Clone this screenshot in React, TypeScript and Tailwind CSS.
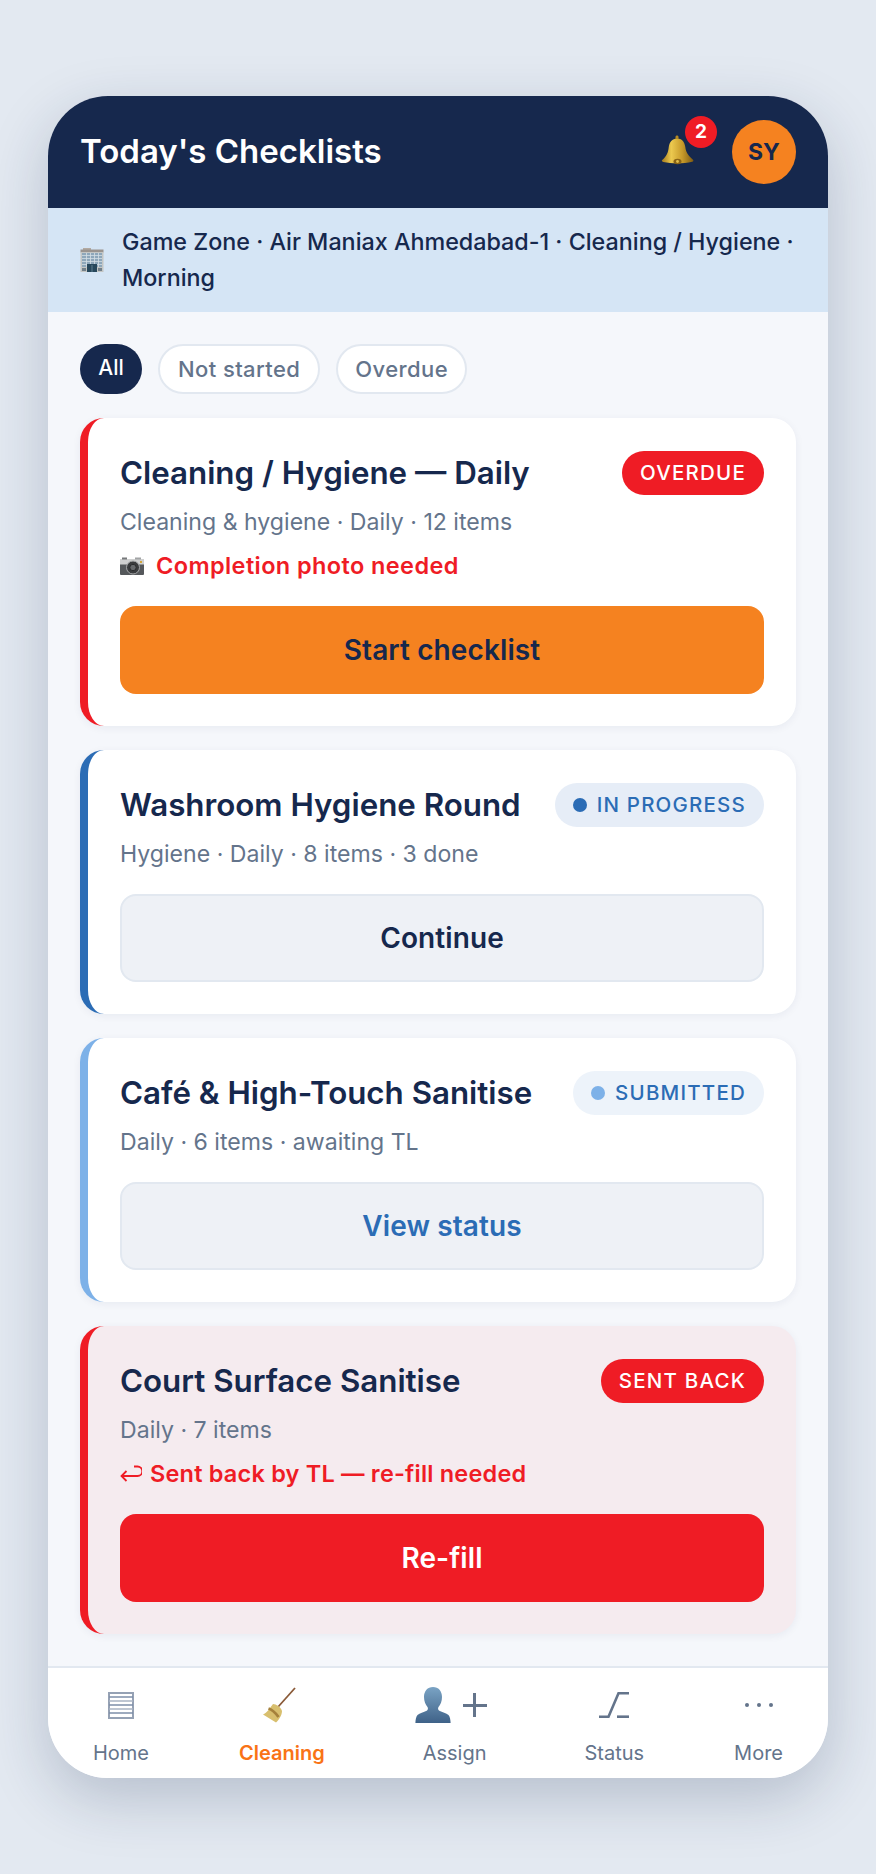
import React from 'react';

const FONT = "font-['Inter',sans-serif]";

const BellIcon = () => (
  <svg width="33" height="30" viewBox="0 0 33 30" className="block">
    <defs>
      <linearGradient id="bell" x1="0" x2="1" y1="0" y2="0">
        <stop offset="0" stopColor="#a37a1c" />
        <stop offset="0.3" stopColor="#ecc94f" />
        <stop offset="0.65" stopColor="#c79a2a" />
        <stop offset="1" stopColor="#7d5a12" />
      </linearGradient>
    </defs>
    <path d="M16 3.500c4.800 0 7.600 3.400 8.300 8.600.6 4.800 2.500 8.500 7.700 12.600.8.900.4 1.700-.8 2-8.500 2-20 2.200-29 .2C1 26.600.4 25.800 1.200 25c4.300-3.600 6-7.600 6.500-12.500.6-5.300 3.500-9 8.300-9z" fill="url(#bell)" />
    <path d="M14.500 4V2c0-2 3-2 3 0v2z" fill="#b58a22" />
    <ellipse cx="16.500" cy="26.500" rx="4" ry="2.800" fill="#8a6416" />
    <circle cx="16.500" cy="26.500" r="1.400" fill="#e2bd4a" />
  </svg>
);

const BuildingIcon = () => (
  <svg width="24" height="24" viewBox="0 0 24 24" className="shrink-0">
    <rect x="3" y="0" width="8" height="2" fill="#b3aaa2" />
    <rect x="0.500" y="1.500" width="23" height="3" fill="#9a948f" />
    <rect x="0.500" y="4" width="23" height="20" fill="#c4c6c4" />
    <rect x="2" y="5" width="20" height="14" fill="#8ea7ba" />
    {[7, 10, 13, 16].map((y) => (
      <rect key={y} x="2" y={y} width="20" height="1" fill="#c3d2dc" />
    ))}
    {[6, 10, 14, 18].map((x) => (
      <rect key={x} x={x} y="5" width="0.800" height="14" fill="#d5dfe5" />
    ))}
    <rect x="7" y="16" width="10" height="8" fill="#27485c" />
    <rect x="11.500" y="17" width="1" height="7" fill="#5f7e8f" />
    <rect x="2" y="20" width="4" height="3" fill="#72808a" />
    <rect x="18" y="20" width="4" height="3" fill="#72808a" />
  </svg>
);

const CameraIcon = () => (
  <svg width="24" height="18" viewBox="0 0 24 18" className="shrink-0">
    <rect x="0" y="2" width="24" height="16" rx="1" fill="#55585b" />
    <rect x="0" y="2" width="24" height="5.500" fill="#cfd0d0" />
    <rect x="2" y="0.500" width="5" height="2" fill="#77797b" />
    <rect x="15" y="0.500" width="6" height="2" fill="#a2a4a5" />
    <circle cx="13" cy="10.500" r="6.500" fill="#3a3c3e" stroke="#a6a8aa" strokeWidth="1" />
    <circle cx="13" cy="10.500" r="3.200" fill="#66696c" stroke="#2a2b2d" strokeWidth="1" />
    <rect x="20" y="4" width="2" height="2" fill="#d2a63c" />
  </svg>
);

const BroomIcon = () => (
  <svg width="36" height="36" viewBox="0 0 36 36" className="mr-[6px]">
    <path d="M34 1 17 20" stroke="#8a5a38" strokeWidth="1.800" />
    <path d="M12 17c3 0 8 3 9 7 0 4-3 9-6 11.500L2 27.500C6 26 9 21 12 17z" fill="#d8bf6e" />
    <path d="M7.500 21.500c3 1 7.500 5 10 8.500" stroke="#a5813b" strokeWidth="2.800" fill="none" />
  </svg>
);

const PersonIcon = () => (
  <svg width="36" height="36" viewBox="0 0 36 36" className="shrink-0">
    <defs>
      <linearGradient id="person" x1="0" x2="0" y1="0" y2="1">
        <stop offset="0" stopColor="#7aa3c4" />
        <stop offset="1" stopColor="#3f6288" />
      </linearGradient>
    </defs>
    <path d="M18 0c5.500 0 9 4 9 10 0 4.500-1.500 7.500-3.500 10-.8 1.200-.5 3 .8 3.800 3 1.500 7 2.200 9.200 4.200 1.500 1.700 2 5 2.100 8H.4C.5 33 1 29.700 2.500 28c2.200-2 6.200-2.700 9.200-4.200 1.300-.8 1.600-2.600.8-3.800C10.500 17.500 9 14.500 9 10 9 4 12.500 0 18 0z" fill="url(#person)" />
  </svg>
);

const StatusIcon = () => (
  <svg width="30" height="26" viewBox="0 0 30 26" fill="none" stroke="#64748b" strokeWidth="2.600">
    <path d="M0 24.700h9.500L19.500 1.300H30" />
    <path d="M18 24.700h12" />
  </svg>
);

const HomeIcon = () => (
  <svg width="26" height="27" viewBox="0 0 26 27" fill="none" strokeWidth="1.400">
    <rect x="1" y="1" width="24" height="25" stroke="#95a1b4" strokeWidth="2" />
    {[5, 9, 13, 17, 21].map((y, i) => (
      <path key={y} d={`M1 ${y}h24`} stroke={i % 2 === 0 ? '#7d8ea8' : '#a8b3c3'} />
    ))}
  </svg>
);

const SentBackIcon = () => (
  <svg width="22" height="18" viewBox="0 0 22 18" fill="none" stroke="#ef1c25" strokeWidth="1.800" className="shrink-0">
    <path d="M14 1.500h3.500a3.700 3.700 0 0 1 0 9.500H1.500" />
    <path d="M6.500 6 1.500 11l5 5" />
  </svg>
);

type Tone = 'red' | 'blue' | 'sky' | 'sent';

const cards = [
  { title: 'Cleaning / Hygiene — Daily', meta: 'Cleaning & hygiene · Daily · 12 items', tone: 'red' as Tone, badge: 'OVERDUE', note: 'photo', action: 'Start checklist' },
  { title: 'Washroom Hygiene Round', meta: 'Hygiene · Daily · 8 items · 3 done', tone: 'blue' as Tone, badge: 'IN PROGRESS', action: 'Continue' },
  { title: 'Café & High-Touch Sanitise', meta: 'Daily · 6 items · awaiting TL', tone: 'sky' as Tone, badge: 'SUBMITTED', action: 'View status' },
  { title: 'Court Surface Sanitise', meta: 'Daily · 7 items', tone: 'sent' as Tone, badge: 'SENT BACK', note: 'back', action: 'Re-fill' },
];

const Badge = ({ tone, label }: { tone: Tone; label: string }) => {
  if (tone === 'red' || tone === 'sent') {
    return (
      <span className="h-[44px] px-[18px] rounded-full bg-[#ef1c25] text-white text-[20.500px] font-medium tracking-[1.200px] flex items-center shrink-0">
        {label}
      </span>
    );
  }
  return (
    <span
      className={`h-[44px] px-[18px] rounded-full text-[20.500px] font-medium tracking-[1.200px] flex items-center gap-[10px] shrink-0 ${
        tone === 'blue' ? 'bg-[#e6edf7] text-[#2b6cb5]' : 'bg-[#edf3fa] text-[#2b6cb5]'
      }`}
    >
      <span className={`w-[14px] h-[14px] rounded-full ${tone === 'blue' ? 'bg-[#2b6cb5]' : 'bg-[#7db1e8]'}`} />
      {label}
    </span>
  );
};

const Card = ({ card }: { card: (typeof cards)[number] }) => {
  const border = card.tone === 'blue' ? 'border-[#2b6cb5]' : card.tone === 'sky' ? 'border-[#7db1e8]' : 'border-[#ef1c25]';
  return (
    <div
      className={`rounded-[24px] border-l-[8px] ${border} p-[32px] shadow-[0_2px_8px_rgba(22,40,77,0.06)] ${
        card.tone === 'sent' ? 'bg-[#f5ebef]' : 'bg-white'
      }`}
    >
      <div className="flex items-center justify-between gap-[16px] h-[46px]">
        <h3 className="text-[31.300px] leading-[46px] font-semibold text-[#16284d]">{card.title}</h3>
        <Badge tone={card.tone} label={card.badge} />
      </div>
      <p className="mt-[6px] text-[23.100px] leading-[40px] text-[#64748b]">{card.meta}</p>
      {card.note === 'photo' && (
        <div className="mt-[6px] h-[36px] flex items-center gap-[12px] text-[23.500px] tracking-[0.400px] font-semibold text-[#ef1c25]">
          <CameraIcon />
          <span>Completion photo needed</span>
        </div>
      )}
      {card.note === 'back' && (
        <div className="mt-[6px] h-[36px] flex items-center gap-[8px] text-[23.500px] tracking-[0.200px] font-semibold text-[#ef1c25]">
          <SentBackIcon />
          <span>Sent back by TL — re-fill needed</span>
        </div>
      )}
      <button
        className={`${card.note ? 'mt-[22px]' : 'mt-[20px]'} w-full h-[88px] rounded-[16px] text-[28px] tracking-[0.100px] font-semibold flex items-center justify-center ${
          card.tone === 'red'
            ? 'bg-[#f58220] text-[#16284d]'
            : card.tone === 'sent'
              ? 'bg-[#ef1c25] text-white'
              : card.tone === 'sky'
                ? 'bg-[#eef1f6] border-2 border-[#e2e8f0] text-[#2b6cb5]'
                : 'bg-[#eef1f6] border-2 border-[#e2e8f0] text-[#16284d]'
        }`}
      >
        {card.action}
      </button>
    </div>
  );
};

const NavItem = ({ icon, label, active, className }: { icon: React.ReactNode; label: string; active?: boolean; className?: string }) => (
  <div className={`flex flex-col items-center ${className ?? ''}`}>
    <div className="h-[44px] flex items-center justify-center">{icon}</div>
    <span className={`mt-[12px] text-[20px] leading-[28px] ${active ? 'font-semibold text-[#f97316]' : 'text-[#64748b]'}`}>{label}</span>
  </div>
);

export default function App() {
  return (
    <div className={`min-h-[1874px] bg-[#e3e9f1] flex justify-center pt-[96px] ${FONT}`}>
      <div className="w-[780px] h-[1682px] rounded-[60px] overflow-hidden bg-[#f5f7fb] flex flex-col shadow-[0_20px_60px_rgba(22,40,77,0.22)]">
        <header className="h-[112px] bg-[#16284d] px-[32px] flex items-center justify-between">
          <h1 className="text-[33px] font-semibold text-white">Today's Checklists</h1>
          <div className="flex items-center gap-[38px]">
            <div className="relative -mt-[4px]">
              <BellIcon />
              <span className="absolute -top-[19px] -right-[23px] w-[32px] h-[32px] rounded-full bg-[#ef1c25] text-white text-[19px] font-bold flex items-center justify-center">2</span>
            </div>
            <div className="w-[64px] h-[64px] rounded-full bg-[#f58220] text-[#16284d] text-[23px] font-bold flex items-center justify-center">SY</div>
          </div>
        </header>

        <div className="h-[104px] bg-[#d5e5f5] px-[32px] flex items-center gap-[18px] text-[23.300px] leading-[36px] text-[#16284d] font-medium">
          <BuildingIcon />
          <span>Game Zone · Air Maniax Ahmedabad-1 · Cleaning / Hygiene · Morning</span>
        </div>

        <main className="flex-1 px-[32px] pt-[32px]">
          <div className="flex gap-[16px]">
            <span className="h-[50px] w-[62px] justify-center pb-[2px] rounded-full bg-[#16284d] text-white text-[21px] font-medium flex items-center">All</span>
            <span className="h-[50px] px-[18px] rounded-full bg-white border-2 border-[#e2e8f0] text-[#64748b] text-[22px] tracking-[0.400px] font-medium flex items-center">Not started</span>
            <span className="h-[50px] px-[17px] rounded-full bg-white border-2 border-[#e2e8f0] text-[#64748b] text-[22px] tracking-[0.400px] font-medium flex items-center">Overdue</span>
          </div>
          <div className="mt-[24px] flex flex-col gap-[24px]">
            {cards.map((c) => (
              <Card key={c.title} card={c} />
            ))}
          </div>
        </main>

        <nav className="h-[112px] bg-white border-t-2 border-[#e2e8f0] flex justify-around pt-[15px]">
          <NavItem icon={<HomeIcon />} label="Home" />
          <NavItem icon={<BroomIcon />} label="Cleaning" active className="mr-[4px]" />
          <NavItem
            icon={
              <div className="w-[72px] flex items-center justify-between -translate-x-[4px]">
                <PersonIcon />
                <span className="relative w-[24px] h-[24px] block">
                  <span className="absolute left-0 right-0 top-[10.500px] h-[3px] bg-[#64748b]" />
                  <span className="absolute top-0 bottom-0 left-[10.500px] w-[3px] bg-[#64748b]" />
                </span>
              </div>
            }
            label="Assign"
          />
          <NavItem icon={<StatusIcon />} label="Status" className="ml-[4px]" />
          <NavItem
            icon={
              <div className="flex gap-[8px]">
                <span className="w-[4px] h-[4px] rounded-full bg-[#64748b]" />
                <span className="w-[4px] h-[4px] rounded-full bg-[#64748b]" />
                <span className="w-[4px] h-[4px] rounded-full bg-[#64748b]" />
              </div>
            }
            label="More"
          />
        </nav>
      </div>
    </div>
  );
}
